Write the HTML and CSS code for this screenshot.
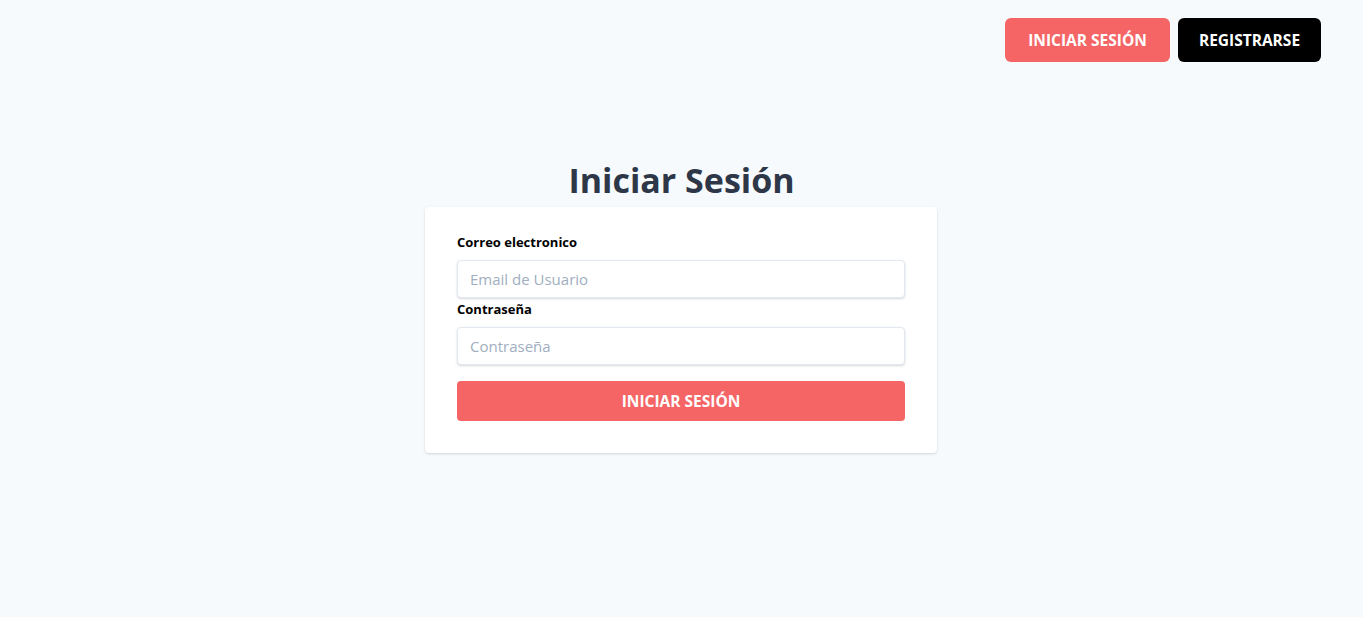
FILE: index.html
```html
<!DOCTYPE html>
<html lang="es">
<head>
<meta charset="utf-8">
<title>Iniciar Sesión</title>
<link rel="stylesheet" href="styles.css">
</head>
<body>
<header class="topbar">
  <a class="nav-btn nav-btn--red" href="#">INICIAR SESIÓN</a>
  <a class="nav-btn nav-btn--black" href="#">REGISTRARSE</a>
</header>
<main class="main">
  <h1 class="title">Iniciar Sesión</h1>
  <form class="card">
    <label class="label" for="email">Correo electronico</label>
    <input class="input input--first" id="email" type="email" placeholder="Email de Usuario">
    <label class="label" for="pass">Contraseña</label>
    <input class="input" id="pass" type="password" placeholder="Contraseña">
    <button class="submit" type="button">INICIAR SESIÓN</button>
  </form>
</main>
</body>
</html>
```
FILE: styles.css
```css
* { box-sizing: border-box; }
html, body { margin: 0; padding: 0; }
body {
  background: #f7fafc;
  font-family: "Open Sans", "Noto Sans", sans-serif;
  color: #000;
  height: 617px;
}
.topbar {
  display: flex;
  justify-content: flex-end;
  gap: 8px;
  padding: 18px 42px 0 0;
}
.nav-btn {
  display: flex;
  align-items: center;
  justify-content: center;
  height: 44px;
  padding: 0 16px;
  border-radius: 6px;
  color: #fff;
  font-weight: 700;
  font-size: 15.5px;
  text-decoration: none;
}
.nav-btn--red { background: #f56565; width: 165px; }
.nav-btn--black { background: #000; width: 143px; }
.main {
  display: flex;
  flex-direction: column;
  align-items: center;
  margin-top: 98px;
}
.title {
  margin: 0 0 7px;
  font-size: 34px;
  line-height: 40px;
  font-weight: 700;
  color: #2d3748;
}
.card {
  width: 512px;
  margin-right: 1px;
  background: #fff;
  border-radius: 4px;
  box-shadow: 0 1px 3px 0 rgba(0,0,0,0.1), 0 1px 2px 0 rgba(0,0,0,0.06);
  padding: 25px 32px 32px;
  display: flex;
  flex-direction: column;
}
.label {
  font-size: 13px;
  line-height: 20px;
  font-weight: 700;
  margin-bottom: 8px;
}
.input {
  height: 38px;
  width: 100%;
  border: 1px solid #e2e8f0;
  border-radius: 4px;
  box-shadow: 0 1px 3px 0 rgba(0,0,0,0.1), 0 1px 2px 0 rgba(0,0,0,0.06);
  padding: 8px 12px;
  font-family: inherit;
  font-size: 15px;
  color: #4a5568;
  outline: none;
}
.input::placeholder { color: #a0aec0; }
.input--first { margin-bottom: 1px; }
.submit {
  margin-top: 16px;
  height: 40px;
  width: 100%;
  border: none;
  border-radius: 4px;
  background: #f56565;
  color: #fff;
  font-family: inherit;
  font-weight: 700;
  font-size: 15.5px;
}
```
